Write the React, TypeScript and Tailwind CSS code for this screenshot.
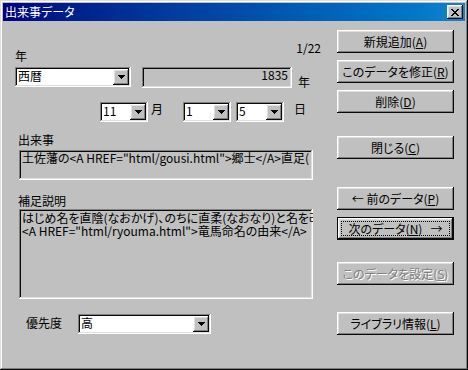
import React from "react";

const sunken =
  "shadow-[inset_-1px_-1px_#ffffff,inset_1px_1px_#808080,inset_-2px_-2px_#dfdfdf,inset_2px_2px_#0a0a0a]";
const raised =
  "shadow-[inset_-1px_-1px_#0a0a0a,inset_1px_1px_#ffffff,inset_-2px_-2px_#808080,inset_2px_2px_#dfdfdf]";
const raisedDef =
  "shadow-[inset_0_0_0_1px_#0a0a0a,inset_-2px_-2px_#0a0a0a,inset_2px_2px_#ffffff,inset_-3px_-3px_#808080,inset_3px_3px_#dfdfdf]";

function Arrow() {
  return (
    <svg width="7" height="4" viewBox="0 0 7 4" shapeRendering="crispEdges">
      <rect x="0" y="0" width="7" height="1" fill="#000" />
      <rect x="1" y="1" width="5" height="1" fill="#000" />
      <rect x="2" y="2" width="3" height="1" fill="#000" />
      <rect x="3" y="3" width="1" height="1" fill="#000" />
    </svg>
  );
}

function Combo({ w, value, ml }: { w: string; value: string; ml: string }) {
  return (
    <div className={`${w} ${ml} h-[20px] bg-white ${sunken} flex p-[2px] shrink-0`}>
      <div className="flex-1 pl-[1px] leading-[14px] text-black whitespace-nowrap">
        {value}
      </div>
      <div className={`w-[16px] h-[16px] bg-[#c0c0c0] ${raised} flex items-center justify-center`}>
        <Arrow />
      </div>
    </div>
  );
}

function Btn({
  children,
  mt,
  variant,
}: {
  children: React.ReactNode;
  mt: string;
  variant?: "default" | "disabled";
}) {
  if (variant === "default") {
    return (
      <div className={`${mt} w-[117px] h-[23px] bg-[#c0c0c0] ${raisedDef} flex p-[4px]`}>
        <div className="flex-1 border border-dotted border-black flex items-center justify-center leading-[12px]">
          {children}
        </div>
      </div>
    );
  }
  return (
    <div
      className={`${mt} w-[117px] h-[23px] bg-[#c0c0c0] ${raised} flex items-center justify-center leading-[12px] ${
        variant === "disabled" ? "text-[#808080] [text-shadow:1px_1px_0_#ffffff]" : "text-black"
      }`}
    >
      {children}
    </div>
  );
}

function U({ c }: { c: string }) {
  return <span className="underline underline-offset-[1px]">{c}</span>;
}

function CloseX() {
  const rows = ["11000011", "01100110", "00111100", "00011000", "00111100", "01100110", "11000011"];
  return (
    <svg width="8" height="7" viewBox="0 0 8 7" shapeRendering="crispEdges">
      {rows.map((r, y) =>
        r.split("").map((c, x) => (c === "1" ? <rect key={`${x}-${y}`} x={x} y={y} width="1" height="1" fill="#000" /> : null))
      )}
    </svg>
  );
}

export default function App() {
  return (
    <div className="w-[468px] h-[370px] bg-[#c0c0c0] shadow-[inset_-1px_-1px_#0a0a0a,inset_1px_1px_#dfdfdf,inset_-2px_-2px_#808080,inset_2px_2px_#ffffff] p-[3px] flex flex-col font-['Noto_Sans_CJK_JP',sans-serif] text-[12px] text-black [font-feature-settings:'palt'] overflow-hidden">
      {/* Title bar */}
      <div className="h-[18px] bg-linear-to-r from-[#000080] to-[#1084d0] flex items-start justify-between shrink-0">
        <div className="text-white ml-[2px] mt-[3px] leading-[12px] text-[12px]">出来事データ</div>
        <div className={`mt-[2px] mr-[2px] w-[16px] h-[14px] bg-[#c0c0c0] ${raised} flex items-center justify-center`}>
          <CloseX />
        </div>
      </div>

      {/* Body */}
      <div className="flex flex-1">
        {/* Left column */}
        <div className="w-[322px] flex flex-col">
          <div className="h-[46px] flex justify-between pr-[4px]">
            <span className="ml-[12px] mt-[29px] leading-[12px]">年</span>
            <span className="mt-[21px] leading-[12px]">1/22</span>
          </div>

          <div className="flex items-start h-[21px]">
            <Combo w="w-[116px]" ml="ml-[12px]" value="西暦" />
            <div className={`ml-[11px] w-[150px] h-[21px] bg-[#c0c0c0] ${sunken} px-[4px] pt-[2px] text-right leading-[12px]`}>
              1835
            </div>
            <span className="ml-[6px] mt-[9px] leading-[12px]">年</span>
          </div>

          <div className="flex items-start mt-[14px]">
            <Combo w="w-[48px]" ml="ml-[97px]" value="11" />
            <span className="ml-[3px] mt-[1px] leading-[12px]">月</span>
            <Combo w="w-[48px]" ml="ml-[20px]" value="1" />
            <Combo w="w-[48px]" ml="ml-[5px]" value="5" />
            <span className="ml-[10px] mt-[1px] leading-[12px]">日</span>
          </div>

          <span className="mt-[12px] ml-[15px] leading-[12px]">出来事</span>
          <div className={`mt-[4px] ml-[16px] w-[294px] h-[30px] bg-[#c0c0c0] ${sunken} px-[3px] pt-[2px] leading-[12px] whitespace-pre overflow-hidden`}>
            {'土佐藩の<A HREF="html/gousi.html">郷士</A>直足('}
          </div>

          <span className="mt-[15px] ml-[15px] leading-[12px]">補足説明</span>
          <div className={`mt-[2px] ml-[16px] w-[294px] h-[90px] bg-[#c0c0c0] ${sunken} px-[3px] pt-[2px] leading-[13px] whitespace-pre overflow-hidden`}>
            {'はじめ名を直陰(なおかげ)、のちに直柔(なおなり)と名を改める\n<A HREF="html/ryouma.html">竜馬命名の由来</A>'}
          </div>

          <div className="flex items-start mt-[15px]">
            <span className="ml-[23px] mt-[3px] leading-[12px]">優先度</span>
            <Combo w="w-[133px]" ml="ml-[16px]" value="高" />
          </div>
        </div>

        {/* Right column */}
        <div className="ml-[12px] flex flex-col">
          <Btn mt="mt-[9px]">
            新規追加(<U c="A" />)
          </Btn>
          <Btn mt="mt-[7px]">
            このデータを修正(<U c="R" />)
          </Btn>
          <Btn mt="mt-[7px]">
            削除(<U c="D" />)
          </Btn>
          <Btn mt="mt-[23px]">
            閉じる(<U c="C" />)
          </Btn>
          <Btn mt="mt-[28px]">
            ← 前のデータ(<U c="P" />)
          </Btn>
          <Btn mt="mt-[7px]" variant="default">
            次のデータ(<U c="N" />)&nbsp;&nbsp;&nbsp;→
          </Btn>
          <Btn mt="mt-[22px]" variant="disabled">
            このデータを設定(<U c="S" />)
          </Btn>
          <Btn mt="mt-[27px]">
            ライブラリ情報(<U c="L" />)
          </Btn>
        </div>
      </div>
    </div>
  );
}
